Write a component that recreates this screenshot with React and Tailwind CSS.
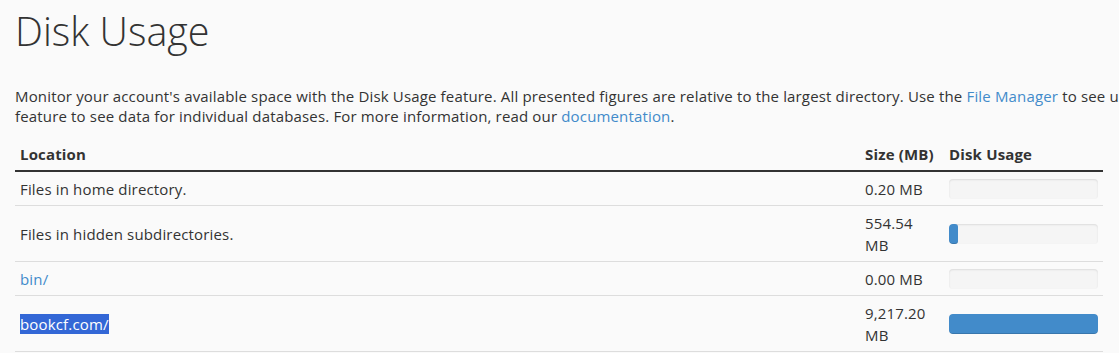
import React from "react";

const rows = [
  { name: "Files in home directory.", size: "0.20 MB", mb: 0.2 },
  { name: "Files in hidden subdirectories.", size: "554.54 MB", mb: 554.54 },
  { name: "bin/", size: "0.00 MB", mb: 0, link: true },
  { name: "bookcf.com/", size: "9,217.20 MB", mb: 9217.2, link: true, selected: true },
];

const maxMb = 9217.2;

const UsageBar = ({ mb }) => {
  const pct = (mb / maxMb) * 100;
  return (
    <div className="h-[20px] w-[149px] overflow-hidden rounded-[4px] bg-[#f5f5f5] shadow-[inset_0_1px_2px_rgba(0,0,0,0.1)]">
      {pct > 0.5 && (
        <div
          className="h-full rounded-[3px] bg-[#428bca] shadow-[inset_0_-1px_0_rgba(0,0,0,0.15)]"
          style={{ width: `${Math.max(pct, 6)}%` }}
        ></div>
      )}
    </div>
  );
};

const App = () => {
  return (
    <div
      className="min-h-[353px] overflow-hidden bg-[#fafafa] px-[15px] text-[15px] leading-[20px] tracking-[0.16px] text-[#333]"
      style={{ fontFamily: '"Open Sans", "Liberation Sans", sans-serif' }}
    >
      <h1 className="mt-[8px] text-[39.5px] leading-[46px] font-light tracking-normal text-[#333]">Disk Usage</h1>

      {/* Description */}
      <p className="mt-[32px] whitespace-nowrap">
        Monitor your account's available space with the Disk Usage feature. All presented figures are
        relative to the largest directory. Use the{" "}
        <a href="#" className="text-[#428bca]">File Manager</a> to see usage data for individual files, or use the MySQL® Databases
        <br />
        feature to see data for individual databases. For more information, read our{" "}
        <a href="#" className="text-[#428bca]">documentation</a>.
      </p>

      <table className="mt-[12px] w-[1088px] border-collapse leading-[22px]">
        <thead>
          <tr className="border-b-2 border-[#333]">
            <th className="px-[5px] py-[5px] text-left font-bold">Location</th>
            <th className="w-[84px] whitespace-nowrap px-[5px] py-[5px] text-left font-bold">Size (MB)</th>
            <th className="w-[159px] whitespace-nowrap px-[5px] py-[5px] text-left font-bold">Disk Usage</th>
          </tr>
        </thead>
        <tbody>
          {rows.map((row) => (
            <tr key={row.name} className="border-b border-[#ddd]">
              <td className="px-[5px] pt-[6px] pb-[5px] align-middle">
                {row.link ? (
                  <a
                    href="#"
                    className={row.selected ? "bg-[#3367d6] text-white" : "text-[#428bca]"}
                  >
                    {row.name}
                  </a>
                ) : (
                  row.name
                )}
              </td>
              <td className="px-[5px] pt-[6px] pb-[5px] align-middle">
                <div className="w-[66px]">{row.size}</div>
              </td>
              <td className="px-[5px] pt-[6px] pb-[5px] align-middle">
                <UsageBar mb={row.mb} />
              </td>
            </tr>
          ))}
        </tbody>
      </table>
    </div>
  );
};

export default App;
